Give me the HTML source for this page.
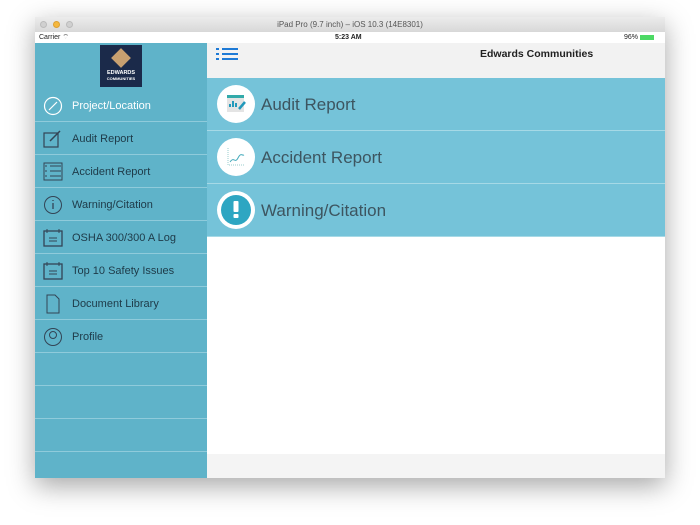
<!DOCTYPE html>
<html><head><style>
*{margin:0;padding:0;box-sizing:border-box}
body{width:700px;height:525px;background:#fff;font-family:"Liberation Sans",sans-serif;position:relative;overflow:hidden}
.win{position:absolute;left:35px;top:17px;width:630px;height:461px;box-shadow:0 8px 25px rgba(0,0,0,.35);background:#fff;overflow:hidden}
.title{position:absolute;left:0;top:0;width:630px;height:15px;background:linear-gradient(#ececec,#d8d8d8);font-size:8px;color:#555;text-align:center;line-height:15px}
.dot{position:absolute;top:4px;width:7px;height:7px;border-radius:50%;background:#d0d0d0;border:1px solid #bbb}
.status{position:absolute;top:15px;left:0;width:630px;height:11px;background:#fff;font-size:7px;line-height:11px;color:#222}
.side{position:absolute;left:0;top:26px;width:172px;height:435px;background:#5fb3c9;overflow:hidden}
.row{position:absolute;left:0;width:172px;height:33px;border-bottom:1px solid #8fcbdb;font-size:11px;color:#1e3a48;line-height:35px;padding-left:37px}
.row svg{position:absolute;left:8px;top:7px}
.hdr{position:absolute;left:172px;top:26px;width:458px;height:35px;background:#f2f2f2}
.item{position:absolute;left:172px;width:458px;height:53px;background:#75c3d9;border-bottom:1px solid #a6d9e6;font-size:17px;color:#3d5560;line-height:53px;padding-left:54px}
.circ{position:absolute;left:10px;top:7px;width:38px;height:38px;border-radius:50%;background:#fff}
.foot{position:absolute;left:172px;top:437px;width:458px;height:24px;background:#f4f4f4}
</style></head><body>
<div class="win">
 <div class="title"><div class="dot" style="left:5px"></div><div class="dot" style="left:18px;background:#f5b83e;border-color:#dca033"></div><div class="dot" style="left:31px"></div>iPad Pro (9.7 inch) – iOS 10.3 (14E8301)</div>
 <div class="status"><span style="position:absolute;left:4px">Carrier ⌔</span><span style="position:absolute;left:300px;font-weight:bold">5:23 AM</span><span style="position:absolute;left:589px">96% <span style="display:inline-block;width:14px;height:5px;background:#4cd964;vertical-align:middle"></span></span></div>
 <div class="side">
  <div style="position:absolute;left:65px;top:2px;width:42px;height:42px;background:#1b2a4a;color:#fff;font-size:5.5px;text-align:center;font-weight:bold">
   <div style="width:14px;height:14px;background:#c8a070;transform:rotate(45deg);margin:6px auto 5px"></div>EDWARDS<div style="font-size:4px">COMMUNITIES</div></div>
  <div class="row" style="top:46px;color:#fff;border-top:0"><svg width="20" height="20"><circle cx="10" cy="10" r="8.5" fill="none" stroke="#fff" stroke-width="1.2"/><path d="M6 14 L14 6" stroke="#fff" stroke-width="1.2"/></svg>Project/Location</div>
  <div class="row" style="top:79px"><svg width="20" height="20"><rect x="1" y="4" width="14" height="14" fill="none" stroke="#345" stroke-width="1.2"/><path d="M7 12 L17 2" stroke="#345" stroke-width="1.5"/></svg>Audit Report</div>
  <div class="row" style="top:112px"><svg width="20" height="20"><path d="M2 4h2M2 9h2M2 14h2M7 4h11M7 9h11M7 14h11M1 1h18v17H1z" fill="none" stroke="#345"/></svg>Accident Report</div>
  <div class="row" style="top:145px"><svg width="20" height="20"><circle cx="10" cy="10" r="8.5" fill="none" stroke="#345"/><path d="M10 8v6M10 5v1" stroke="#345" stroke-width="1.3"/></svg>Warning/Citation</div>
  <div class="row" style="top:178px"><svg width="20" height="20"><rect x="1" y="3" width="18" height="15" fill="none" stroke="#345" stroke-width="1.3"/><path d="M4 1v4M16 1v4M6 10h8M6 13h8" stroke="#345"/></svg>OSHA 300/300 A Log</div>
  <div class="row" style="top:211px"><svg width="20" height="20"><rect x="1" y="3" width="18" height="15" fill="none" stroke="#345" stroke-width="1.3"/><path d="M4 1v4M16 1v4M6 10h8M6 13h8" stroke="#345"/></svg>Top 10 Safety Issues</div>
  <div class="row" style="top:244px"><svg width="20" height="20"><path d="M4 1h8l4 4v14H4z" fill="none" stroke="#345"/></svg>Document Library</div>
  <div class="row" style="top:277px"><svg width="20" height="20"><circle cx="10" cy="10" r="8.5" fill="none" stroke="#345"/><circle cx="10" cy="8" r="3.5" fill="none" stroke="#345"/></svg>Profile</div>
  <div class="row" style="top:310px"></div><div class="row" style="top:343px"></div><div class="row" style="top:376px"></div><div class="row" style="top:409px"></div>
 </div>
 <div class="hdr"><svg style="position:absolute;left:9px;top:4px" width="22" height="14"><path d="M0 2h3M6 2h16M0 7h3M6 7h16M0 12h3M6 12h16" stroke="#1e7ad6" stroke-width="2"/></svg>
  <div style="position:absolute;left:273px;top:5px;font-size:10.5px;font-weight:bold;color:#222">Edwards Communities</div></div>
 <div class="item" style="top:61px"><div class="circ"><svg width="38" height="38"><rect x="10" y="11" width="17" height="16" fill="#e4e4e4"/><rect x="10" y="10" width="17" height="3" fill="#3aa"/><path d="M13 22v-3M16 22v-6M19 22v-4" stroke="#29b" stroke-width="2"/><path d="M22 24l6-7" stroke="#29b" stroke-width="2.5"/></svg></div>Audit Report</div>
 <div class="item" style="top:114px"><div class="circ"><svg width="38" height="38"><path d="M11 10v17h17" fill="none" stroke="#9cc" stroke-dasharray="1 1"/><path d="M13 24c4-6 5 2 8-4s4-2 6-3" fill="none" stroke="#4ab"/></svg></div>Accident Report</div>
 <div class="item" style="top:167px"><div class="circ"><svg width="38" height="38"><circle cx="19" cy="19" r="15" fill="#2ea6c2"/><rect x="16.5" y="10" width="5" height="11" rx="1" fill="#fff"/><rect x="16.5" y="23" width="5" height="4" rx="1" fill="#fff"/></svg></div>Warning/Citation</div>
 <div class="foot"></div>
</div>
</body></html>
